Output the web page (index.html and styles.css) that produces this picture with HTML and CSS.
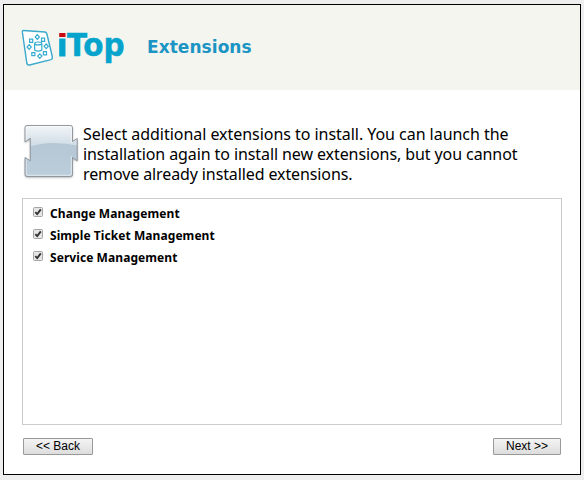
FILE: index.html
```html
<!DOCTYPE html>
<html lang="en">
<head>
<meta charset="utf-8">
<title>iTop Extensions</title>
<link rel="stylesheet" href="styles.css">
</head>
<body>
<main class="wizard">
  <header class="header">
    <svg class="logo" width="106" height="40" viewBox="20 28 106 40">
      <path d="M23.5 30.5L45 32Q46.5 32.2 46.9 34L52.4 57Q52.7 59 51 59.6L29.5 65Q27.3 65.3 26.9 63.5L22.4 32.4Q22.2 30.5 23.5 30.5Z" fill="#fff" stroke="#3aa9cc" stroke-width="1.4"/>
      <g fill="#fff" stroke="#36abd0" stroke-width="1.2">
        <path d="M34.6 43.4V50Q38.2 52.4 41.8 50V43.4"/>
        <ellipse cx="38.2" cy="43.4" rx="3.6" ry="1.4"/>
        <path d="M37.3 34.7l2.1 2.3-2.1 2.3-2.1-2.3zM29.2 44.7l2.1 2.3-2.1 2.3-2.1-2.3zM46.2 44l2.1 2.3-2.1 2.3-2.1-2.3zM39.8 53.8l2.1 2.3-2.1 2.3-2.1-2.3z"/>
        <path d="M29.6 39.2h3.1v3.1h-3.1zM41.5 38.2h3.1v3.1h-3.1zM31.8 52.6h3.1v3.1h-3.1zM43.4 51.7h3.1v3.1h-3.1z"/>
      </g>
      <path d="M59.2 33h6.3v4h-6.3z" fill="#c90a12"/>
      <path d="M59.2 38.5h6.3v18h-6.3z" fill="#06a4cd"/>
      <text class="wordmark" x="67" y="56.3" textLength="57.5" lengthAdjust="spacingAndGlyphs">Top</text>
    </svg>
    <h1 class="title">Extensions</h1>
  </header>
  <section class="intro">
    <svg class="puzzle" width="60" height="60" viewBox="23 122 60 60">
      <defs>
        <linearGradient id="body" x1="0" y1="0" x2="0" y2="1">
          <stop offset="0" stop-color="#f4f7fa"/><stop offset=".4" stop-color="#d0dce5"/><stop offset="1" stop-color="#bdcedb"/>
        </linearGradient>
        <linearGradient id="shade" x1="0" y1="0" x2="0" y2="1">
          <stop offset="0" stop-color="#b5c7d4"/><stop offset="1" stop-color="#bccedb"/>
        </linearGradient>
        <clipPath id="piece"><path d="M27 125.5H70.5Q72.5 125.5 72.5 127.5V141.5L77.2 138.5V160.8L72.5 157.5V174.5Q72.5 176.5 70.5 176.5H27Q25 176.5 25 174.5V157.5L30.3 160.8V138.3L25 142V127.5Q25 125.5 27 125.5Z"/></clipPath>
      </defs>
      <path class="puzzle-shadow" d="M27 125.5H70.5Q72.5 125.5 72.5 127.5V141.5L77.2 138.5V160.8L72.5 157.5V174.5Q72.5 176.5 70.5 176.5H27Q25 176.5 25 174.5V157.5L30.3 160.8V138.3L25 142V127.5Q25 125.5 27 125.5Z"/>
      <g clip-path="url(#piece)">
        <path d="M23 124H79V178H23Z" fill="url(#body)"/>
        <path d="M23 149Q48 139 79 146V178H23Z" fill="url(#shade)"/>
      </g>
      <path d="M28 126.7H69.5Q71.3 126.7 71.3 128.5V143.2M71.3 156V173.5Q71.3 175.3 69.5 175.3H28Q26.2 175.3 26.2 173.5V159.2M26.2 141.5V128.5Q26.2 126.7 28 126.7" fill="none" stroke="#fff" stroke-opacity=".55" stroke-width="1"/>
      <path d="M27 125.5H70.5Q72.5 125.5 72.5 127.5V141.5L77.2 138.5V160.8L72.5 157.5V174.5Q72.5 176.5 70.5 176.5H27Q25 176.5 25 174.5V157.5L30.3 160.8V138.3L25 142V127.5Q25 125.5 27 125.5Z" fill="none" stroke="#8c9298" stroke-width=".9"/>
    </svg>
    <p class="lead"><span class="line l1">Select additional extensions to install. You can launch the</span> <span class="line l2">installation again to install new extensions, but you cannot</span> <span class="line l3">remove already installed extensions.</span></p>
  </section>
  <section class="choices">
    <label class="choice"><svg class="box" width="10" height="10"><rect x=".5" y=".5" width="9" height="9" rx="1"/><path d="M2.3 5.2L4.2 7.1L7.8 2.4"/></svg><span>Change Management</span></label>
    <label class="choice"><svg class="box" width="10" height="10"><rect x=".5" y=".5" width="9" height="9" rx="1"/><path d="M2.3 5.2L4.2 7.1L7.8 2.4"/></svg><span>Simple Ticket Management</span></label>
    <label class="choice"><svg class="box" width="10" height="10"><rect x=".5" y=".5" width="9" height="9" rx="1"/><path d="M2.3 5.2L4.2 7.1L7.8 2.4"/></svg><span>Service Management</span></label>
  </section>
  <footer class="actions">
    <button class="btn back">&lt;&lt; Back</button>
    <button class="btn next">Next &gt;&gt;</button>
  </footer>
</main>
</body>
</html>
```
FILE: styles.css
```css
* { box-sizing: border-box; }
body {
  margin: 0;
  padding: 4px 3px 5px;
  height: 480px;
  background: #eee;
  color: #000;
  font-family: "Noto Sans", sans-serif;
  overflow: hidden;
}
.wizard {
  width: 578px;
  height: 471px;
  border: 1px solid #000;
  background: #fff;
}
.header {
  display: flex;
  height: 85px;
  padding: 23px 0 0 16px;
  background: #f5f5ef;
}
.logo { flex: none; overflow: visible; }
.wordmark {
  font: bold 32px "DejaVu Sans", sans-serif;
  fill: #06a4cd;
  stroke: #06a4cd;
  stroke-width: .5px;
}
.title {
  margin: 7px 0 0 21px;
  font: bold 17px/24px "DejaVu Sans", sans-serif;
  letter-spacing: .05px;
  color: #1c94c4;
}
.intro {
  display: flex;
  height: 108px;
  padding: 32px 0 0 19px;
}
.puzzle { flex: none; }
.puzzle-shadow {
  fill: #999;
  filter: drop-shadow(0 1px 1px rgba(0, 0, 0, .35));
}
.lead {
  margin: 2px 0 0;
  font-size: 16px;
  line-height: 20px;
  white-space: nowrap;
}
.line { display: block; }
.l1 { letter-spacing: -.04px; }
.l2 { letter-spacing: -.09px; }
.l3 { letter-spacing: -.11px; }
.choices {
  width: 540px;
  height: 227px;
  margin-left: 18px;
  padding: 3px 10px;
  border: 1px solid #ccc;
}
.choice {
  display: flex;
  align-items: center;
  gap: 7px;
  height: 22px;
  font-size: 12px;
  font-weight: bold;
  letter-spacing: .07px;
  white-space: nowrap;
}
.box {
  flex: none;
  margin-top: -3px;
}
.box rect { fill: #e6e6e6; stroke: #a5a5a5; }
.box path { fill: none; stroke: #333; stroke-width: 1.9; }
.actions {
  display: flex;
  justify-content: space-between;
  padding: 13px 19px 0;
}
.btn {
  height: 17px;
  padding: 0 0 1px;
  border: 1px solid #999;
  border-radius: 1px;
  background: linear-gradient(#f4f4f4, #ddd);
  color: #000;
  font: 12px/14px "Liberation Sans", sans-serif;
}
.back { width: 70px; }
.next { width: 68px; }
```
